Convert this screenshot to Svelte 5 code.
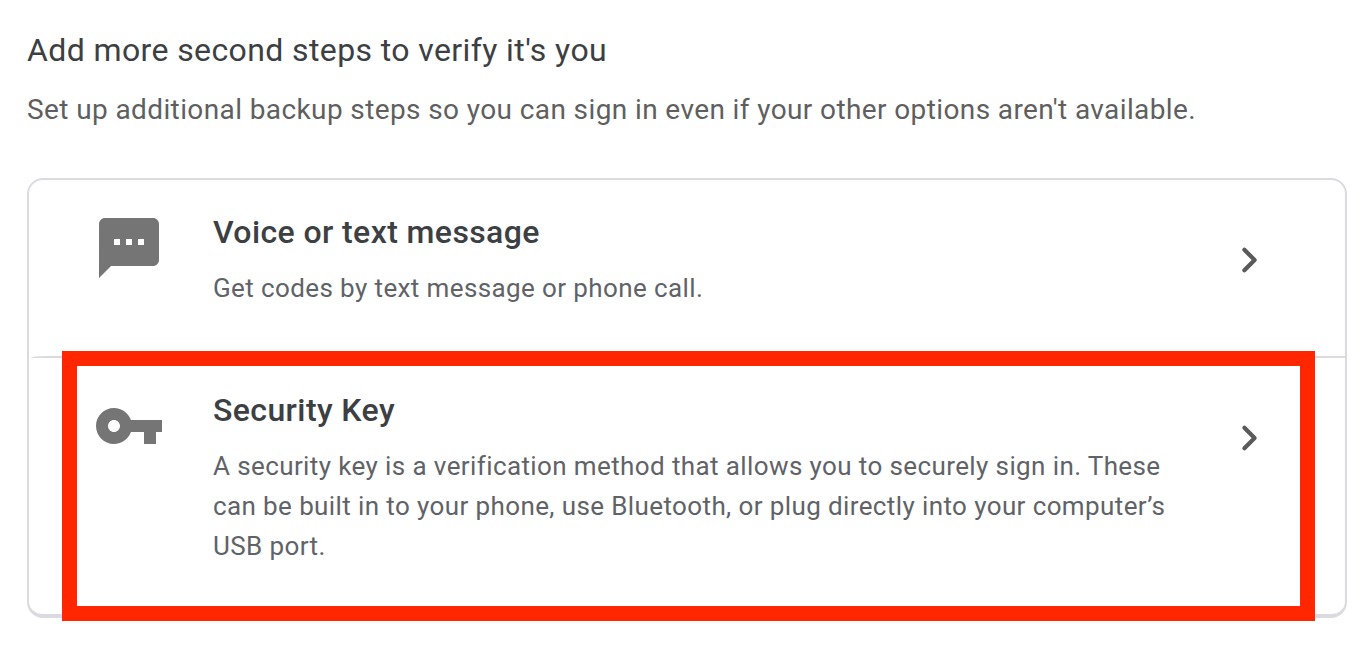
<script lang="ts">
    const steps = [
        { icon: "message", title: "Voice or text message", lines: ["Get codes by text message or phone call."] },
        {
            icon: "key",
            title: "Security Key",
            lines: [
                "A security key is a verification method that allows you to securely sign in. These",
                "can be built in to your phone, use Bluetooth, or plug directly into your computer’s",
                "USB port.",
            ],
        },
    ];
</script>

<main>
    <h1>Add more second steps to verify it's you</h1>
    <p class="intro">Set up additional backup steps so you can sign in even if your other options aren't available.</p>

    <div class="card">
        {#each steps as step}
            <section class={step.icon}>
                <div class="icon">
                    {#if step.icon === "message"}
                        <svg width="72" height="72" viewBox="0 0 24 24">
                            <path d="M20 2H4c-1.1 0-1.99.9-1.99 2L2 22l4-4h14c1.1 0 2-.9 2-2V4c0-1.1-.9-2-2-2zM9 11H7V9h2v2zm4 0h-2V9h2v2zm4 0h-2V9h2v2z" />
                        </svg>
                    {:else}
                        <svg width="72" height="72" viewBox="0 0 24 24">
                            <path d="M12.65 10C11.83 7.67 9.61 6 7 6c-3.31 0-6 2.69-6 6s2.69 6 6 6c2.61 0 4.83-1.67 5.65-4H17v4h4v-4h2v-4H12.65zM7 14c-1.1 0-2-.9-2-2s.9-2 2-2 2 .9 2 2-.9 2-2 2z" />
                        </svg>
                    {/if}
                </div>
                <div class="text">
                    <h2>{step.title}</h2>
                    <p>{#each step.lines as line}<span>{line}</span>{/each}</p>
                </div>
                <svg class="arrow" width="48" height="48" viewBox="0 0 24 24">
                    <path d="M9.7 6.9L14.8 12L9.7 17.1" />
                </svg>
            </section>
        {/each}
    </div>
    <div class="highlight"></div>
</main>

<style>
    :global(body) {
        background: #fff;
    }
    main {
        position: relative;
        box-sizing: border-box;
        width: 1372px;
        height: 648px;
        padding: 30px 25px 0 27px;
        font-family: Roboto, sans-serif;
        overflow: hidden;
    }
    h1, h2, p {
        margin: 0;
        white-space: nowrap;
    }
    h1 {
        font-size: 32px;
        line-height: 40px;
        font-weight: 400;
        letter-spacing: .39px;
        color: #3c4043;
    }
    .intro {
        margin-top: 20px;
        font-size: 28px;
        line-height: 40px;
        letter-spacing: .39px;
        color: #5f5f5f;
    }
    .card {
        box-sizing: border-box;
        height: 440px;
        margin-top: 48px;
        border: 2px solid #dadae0;
        border-bottom-width: 4px;
        border-radius: 16px;
    }
    section {
        box-sizing: border-box;
        display: flex;
        height: 176px;
        padding: 32px 0 0 64px;
    }
    .key {
        height: 258px;
        padding-top: 32px;
        margin-left: 2px;
        padding-left: 62px;
        border-top: 2px solid #dadae0;
        border-top-left-radius: 16px 2px;
    }
    .icon {
        width: 120px;
    }
    .icon svg {
        display: block;
        fill: #757575;
    }
    .text {
        width: 1012px;
    }
    h2 {
        font-size: 32px;
        line-height: 40px;
        font-weight: 500;
        letter-spacing: .4px;
        color: #3c4043;
    }
    .text p {
        margin-top: 16px;
        font-size: 26px;
        line-height: 40px;
        letter-spacing: .39px;
        color: #5f6368;
    }
    .text span {
        display: block;
    }
    .arrow {
        margin-top: 24px;
        fill: none;
        stroke: #5a5a5a;
        stroke-width: 2.1;
        stroke-linecap: round;
        stroke-linejoin: round;
    }
    .highlight {
        position: absolute;
        box-sizing: border-box;
        left: 62px;
        top: 351px;
        width: 1253px;
        height: 270px;
        border: 15px solid #ff2600;
    }
</style>
